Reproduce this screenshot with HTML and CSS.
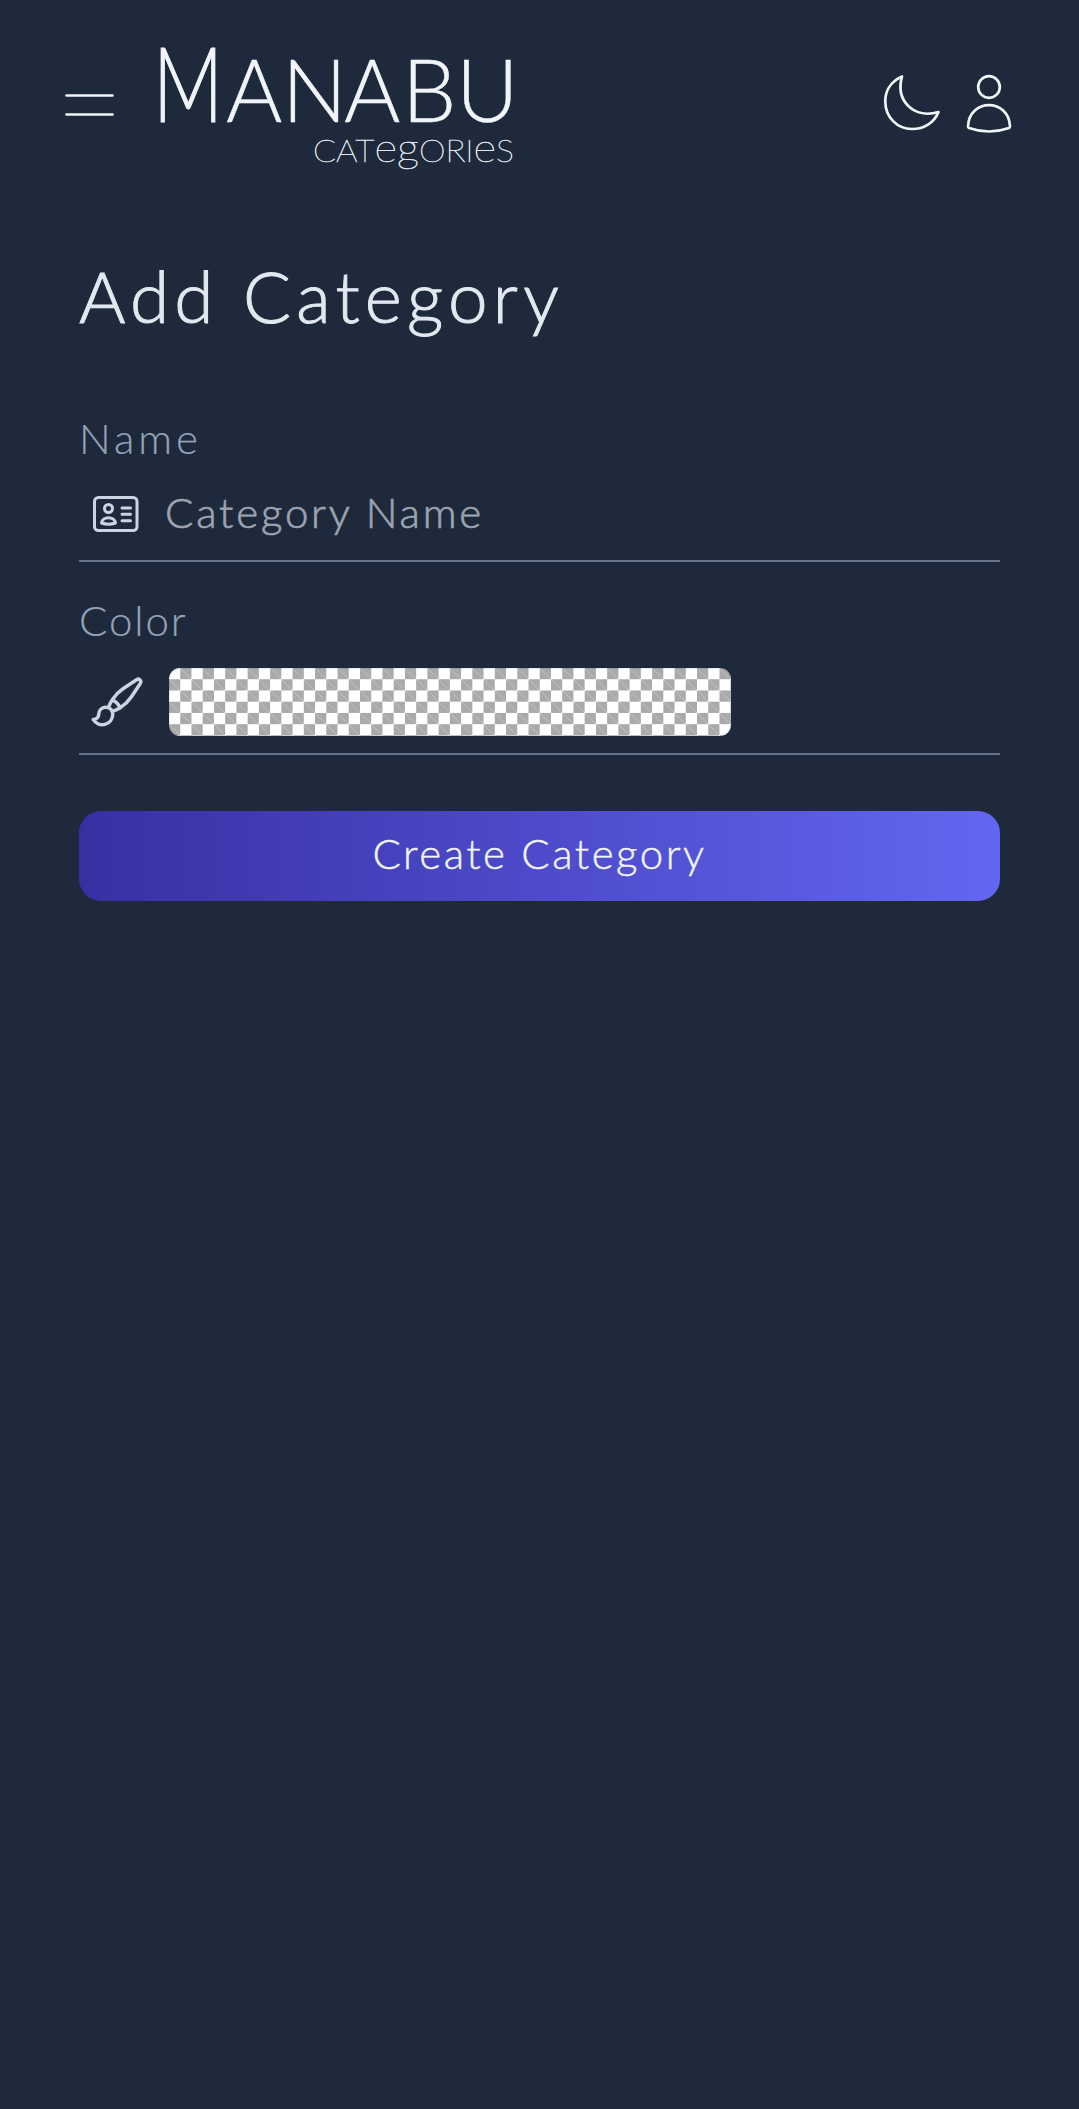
FILE: index.html
```html
<!DOCTYPE html>
<html lang="en">
<head>
<meta charset="utf-8">
<title>Manabu – Add Category</title>
<link rel="stylesheet" href="styles.css">
</head>
<body>
<header class="topbar">
  <button class="icon-button menu" aria-label="Menu">
    <svg width="50" height="24" viewBox="0 0 50 24"><path d="M2.500 2.500H48.500M2.500 21.500H48.500"/></svg>
  </button>
  <svg class="brand" width="360" height="140" viewBox="0 0 360 140">
    <text class="brand-name brand-initial" x="-3" y="92" textLength="70" lengthAdjust="spacingAndGlyphs">M</text>
    <text class="brand-name" x="70 126 188 246 300" y="92">ANABU</text>
    <text class="brand-section" x="157" y="132" textLength="201" lengthAdjust="spacingAndGlyphs">CAT<tspan class="tall">eg</tspan>ORI<tspan class="tall">e</tspan>S</text>
  </svg>
  <nav class="actions">
    <svg width="60" height="60" viewBox="0 0 60 60"><path d="M20 3.500C8 9 3 19 3.300 29C3.500 44 15 56 30 56C42 56 52 50 56.500 39C33 46 13 29 20 3.500Z"/></svg>
    <svg width="48" height="60" viewBox="0 0 48 60"><circle cx="24" cy="14" r="10.800"/><path d="M3 53.500C4 25 44 25 45 53.500Q45 54.500 44 55Q24 62 4 55Q3 54.500 3 53.500Z"/></svg>
  </nav>
</header>
<main class="page">
  <h1 class="title">Add Category</h1>
  <form class="form">
    <label class="label label-name" for="name">Name</label>
    <div class="field field-name">
      <svg width="46" height="36" viewBox="0 0 46 36"><rect x="1.500" y="1.500" width="42.500" height="33" rx="4"/><circle cx="15.500" cy="12.500" r="4"/><path d="M8.500 27C9.500 20 21.500 20 22.500 27Q15.500 29.500 8.500 27ZM29 12H37.500M29 18.300H37.500M29 24.700H37.500"/></svg>
      <input id="name" class="input" type="text" placeholder="Category Name">
    </div>
    <label class="label label-color">Color</label>
    <div class="field field-color">
      <svg class="brush" width="56" height="56" viewBox="0 0 24 24"><path d="M9.530 16.122a3 3 0 0 0-5.780 1.128 2.250 2.250 0 0 1-2.400 2.245 4.500 4.500 0 0 0 8.400-2.245c0-.399-.078-.780-.220-1.128Zm0 0a15.998 15.998 0 0 0 3.388-1.620m-5.043-.025a15.994 15.994 0 0 1 1.622-3.395m3.420 3.420a15.995 15.995 0 0 0 4.764-4.648l3.876-5.814a1.151 1.151 0 0 0-1.597-1.597L14.146 6.320a15.996 15.996 0 0 0-4.649 4.763m3.420 3.420a6.776 6.776 0 0 0-3.420-3.420"/></svg>
      <div class="swatch"></div>
    </div>
    <button class="submit" type="button">Create Category</button>
  </form>
</main>
</body>
</html>
```

FILE: styles.css
```css
* { box-sizing: border-box; }
body {
  margin: 0;
  min-height: 100vh;
  background: #1e293b;
  color: #e2e8f0;
  font-family: Lato, sans-serif;
  font-weight: 300;
}
svg { display: block; fill: none; stroke: #f1f5f9; stroke-width: 2.7; stroke-linecap: round; stroke-linejoin: round; }
button { border: 0; padding: 0; background: none; font: inherit; }
.topbar { display: flex; align-items: flex-start; height: 210px; padding: 0 64px; }
.menu { margin-top: 93px; width: 50px; }
.brand { margin: 30px 0 0 42px; overflow: visible; }
.brand text { fill: #f1f5f9; stroke: none; }
.brand .brand-name { font-size: 86px; stroke: #f1f5f9; stroke-width: .4; }
.brand .brand-initial { font-size: 104px; stroke-width: 1; }
.brand .brand-section { font-size: 31px; font-weight: 100; fill: #e2e8f0; stroke: #e2e8f0; stroke-width: .6; }
.brand .tall { font-size: 40px; }
.actions { display: flex; gap: 23px; margin: 73px 2px 0 auto; }
.page { padding: 0 79px; }
.title { margin: 41px 0 0; height: 90px; font-size: 71px; line-height: 90px; font-weight: 300; letter-spacing: 5.200px; -webkit-text-stroke: 1px; }
.form { display: flex; flex-direction: column; padding-top: 69px; }
.label { height: 57px; line-height: 56px; font-size: 42px; letter-spacing: 4px; color: #94a3b8; -webkit-text-stroke: .2px; }
.field { display: flex; align-items: center; border-bottom: 2px solid #64748b; }
.field svg { stroke: #cbd5e1; stroke-width: 3; }
.field-name { height: 95px; padding-left: 14px; gap: 26px; }
.input { flex: 1; min-width: 0; border: 0; outline: 0; padding: 0 0 4px; background: none; color: #e2e8f0; font: inherit; font-size: 42px; letter-spacing: 2.800px; -webkit-text-stroke: .7px; }
.input::placeholder { color: #9ca3af; opacity: 1; }
.label-color { margin-top: 30px; letter-spacing: 1.900px; }
.field-color { height: 106px; padding: 2px 0 0 11px; }
.field .brush { stroke-width: 1.5; }
.swatch {
  width: 562px;
  height: 68px;
  margin-left: 23px;
  border-radius: 11px;
  background-color: #fff;
  background-image:
    linear-gradient(45deg, #aaa 25%, transparent 25%, transparent 75%, #aaa 75%),
    linear-gradient(45deg, #aaa 25%, transparent 25%, transparent 75%, #aaa 75%);
  background-size: 22.480px 22.480px;
  background-position: 0 0, 11.240px 11.240px;
  box-shadow: inset 0 0 0 1px rgba(0, 0, 0, .08);
}
.submit {
  height: 90px;
  margin-top: 56px;
  padding-bottom: 6px;
  border-radius: 22px;
  background: linear-gradient(90deg, #3730a3, #6366f1);
  color: #f1f5f9;
  font-size: 42px;
  letter-spacing: 2.500px;
  -webkit-text-stroke: .4px;
}
```
